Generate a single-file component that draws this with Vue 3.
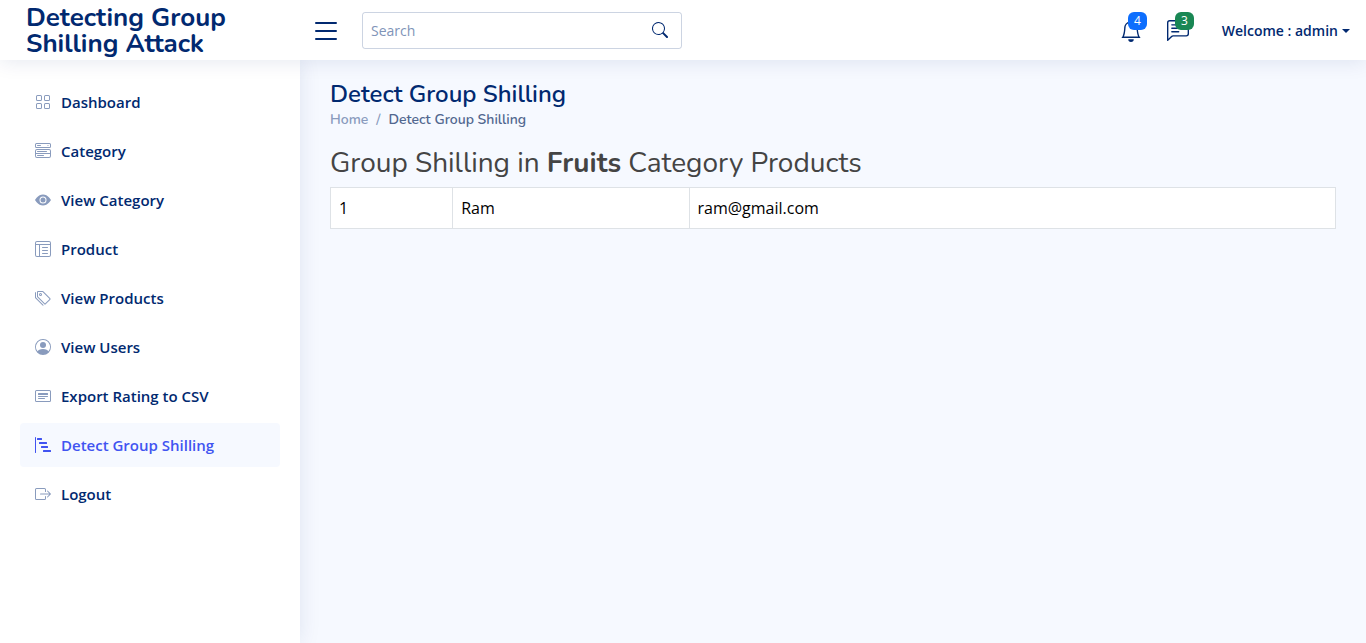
<script setup>
const icons = {
  grid: ['M1 2.5A1.5 1.5 0 0 1 2.5 1h3A1.5 1.5 0 0 1 7 2.5v3A1.5 1.5 0 0 1 5.5 7h-3A1.5 1.5 0 0 1 1 5.5v-3zM2.5 2a.5.5 0 0 0-.5.5v3a.5.5 0 0 0 .5.5h3a.5.5 0 0 0 .5-.5v-3a.5.5 0 0 0-.5-.5h-3zm6.5.5A1.5 1.5 0 0 1 10.5 1h3A1.5 1.5 0 0 1 15 2.5v3A1.5 1.5 0 0 1 13.5 7h-3A1.5 1.5 0 0 1 9 5.5v-3zm1.5-.5a.5.5 0 0 0-.5.5v3a.5.5 0 0 0 .5.5h3a.5.5 0 0 0 .5-.5v-3a.5.5 0 0 0-.5-.5h-3zM1 10.5A1.5 1.5 0 0 1 2.5 9h3A1.5 1.5 0 0 1 7 10.5v3A1.5 1.5 0 0 1 5.5 15h-3A1.5 1.5 0 0 1 1 13.5v-3zm1.5-.5a.5.5 0 0 0-.5.5v3a.5.5 0 0 0 .5.5h3a.5.5 0 0 0 .5-.5v-3a.5.5 0 0 0-.5-.5h-3zm6.5.5A1.5 1.5 0 0 1 10.5 9h3a1.5 1.5 0 0 1 1.5 1.5v3a1.5 1.5 0 0 1-1.5 1.5h-3A1.5 1.5 0 0 1 9 13.5v-3zm1.5-.5a.5.5 0 0 0-.5.5v3a.5.5 0 0 0 .5.5h3a.5.5 0 0 0 .5-.5v-3a.5.5 0 0 0-.5-.5h-3z'],
  menu: [
    'M0 1.5A1.5 1.5 0 0 1 1.5 0h13A1.5 1.5 0 0 1 16 1.5v2A1.5 1.5 0 0 1 14.5 5h-13A1.5 1.5 0 0 1 0 3.5v-2zM1.5 1a.5.5 0 0 0-.5.5v2a.5.5 0 0 0 .5.5h13a.5.5 0 0 0 .5-.5v-2a.5.5 0 0 0-.5-.5h-13z',
    'M2 2.5a.5.5 0 0 1 .5-.5h3a.5.5 0 0 1 0 1h-3a.5.5 0 0 1-.5-.5zm10.823.323-.396-.396A.25.25 0 0 1 12.604 2h.792a.25.25 0 0 1 .177.427l-.396.396a.25.25 0 0 1-.354 0zM0 8a2 2 0 0 1 2-2h12a2 2 0 0 1 2 2v5a2 2 0 0 1-2 2H2a2 2 0 0 1-2-2V8zm1 3v2a1 1 0 0 0 1 1h12a1 1 0 0 0 1-1v-2H1zm14-1V8a1 1 0 0 0-1-1H2a1 1 0 0 0-1 1v2h14zM2 8.5a.5.5 0 0 1 .5-.5h9a.5.5 0 0 1 0 1h-9a.5.5 0 0 1-.5-.5zm0 4a.5.5 0 0 1 .5-.5h6a.5.5 0 0 1 0 1h-6a.5.5 0 0 1-.5-.5z',
  ],
  eye: ['M10.5 8a2.5 2.5 0 1 1-5 0 2.5 2.5 0 0 1 5 0z', 'M0 8s3-5.5 8-5.5S16 8 16 8s-3 5.5-8 5.5S0 8 0 8zm8 3.5a3.5 3.5 0 1 0 0-7 3.5 3.5 0 0 0 0 7z'],
  layout: [
    'M13 6.5a.5.5 0 0 0-.5-.5h-5a.5.5 0 0 0 0 1h5a.5.5 0 0 0 .5-.5zm0 3a.5.5 0 0 0-.5-.5h-5a.5.5 0 0 0 0 1h5a.5.5 0 0 0 .5-.5zm-.5 2.5a.5.5 0 0 1 0 1h-5a.5.5 0 0 1 0-1h5z',
    'M14 0a2 2 0 0 1 2 2v12a2 2 0 0 1-2 2H2a2 2 0 0 1-2-2V2a2 2 0 0 1 2-2h12zM2 1a1 1 0 0 0-1 1v1h14V2a1 1 0 0 0-1-1H2zM1 4v10a1 1 0 0 0 1 1h2V4H1zm4 0v11h9a1 1 0 0 0 1-1V4H5z',
  ],
  tags: [
    'M3 2v4.586l7 7L14.586 9l-7-7H3zM2 2a1 1 0 0 1 1-1h4.586a1 1 0 0 1 .707.293l7 7a1 1 0 0 1 0 1.414l-4.586 4.586a1 1 0 0 1-1.414 0l-7-7A1 1 0 0 1 2 6.586V2z',
    'M5.5 5a.5.5 0 1 1 0-1 .5.5 0 0 1 0 1zm0 1a1.5 1.5 0 1 0 0-3 1.5 1.5 0 0 0 0 3zM1 7.086a1 1 0 0 0 .293.707L8.75 15.25l-.043.043a1 1 0 0 1-1.414 0l-7-7A1 1 0 0 1 0 7.586V3a1 1 0 0 1 1-1v5.086z',
  ],
  person: ['M11 6a3 3 0 1 1-6 0 3 3 0 0 1 6 0z', 'M0 8a8 8 0 1 1 16 0A8 8 0 0 1 0 8zm8-7a7 7 0 0 0-5.468 11.37C3.242 11.226 4.805 10 8 10s4.757 1.225 5.468 2.37A7 7 0 0 0 8 1z'],
  card: [
    'M14.5 3a.5.5 0 0 1 .5.5v9a.5.5 0 0 1-.5.5h-13a.5.5 0 0 1-.5-.5v-9a.5.5 0 0 1 .5-.5h13zm-13-1A1.5 1.5 0 0 0 0 3.5v9A1.5 1.5 0 0 0 1.5 14h13a1.5 1.5 0 0 0 1.5-1.5v-9A1.5 1.5 0 0 0 14.5 2h-13z',
    'M3 8.5a.5.5 0 0 1 .5-.5h9a.5.5 0 0 1 0 1h-9a.5.5 0 0 1-.5-.5zm0 2a.5.5 0 0 1 .5-.5h6a.5.5 0 0 1 0 1h-6a.5.5 0 0 1-.5-.5zm0-5a.5.5 0 0 1 .5-.5h9a.5.5 0 0 1 .5.5v1a.5.5 0 0 1-.5.5h-9a.5.5 0 0 1-.5-.5v-1z',
  ],
  steps: ['M.5 0a.5.5 0 0 1 .5.5v15a.5.5 0 0 1-1 0V.5A.5.5 0 0 1 .5 0zM2 1.5a.5.5 0 0 1 .5-.5h4a.5.5 0 0 1 .5.5v1a.5.5 0 0 1-.5.5h-4a.5.5 0 0 1-.5-.5v-1zm2 4a.5.5 0 0 1 .5-.5h7a.5.5 0 0 1 .5.5v1a.5.5 0 0 1-.5.5h-7a.5.5 0 0 1-.5-.5v-1zm2 4a.5.5 0 0 1 .5-.5h6a.5.5 0 0 1 .5.5v1a.5.5 0 0 1-.5.5h-6a.5.5 0 0 1-.5-.5v-1zm2 4a.5.5 0 0 1 .5-.5h7a.5.5 0 0 1 .5.5v1a.5.5 0 0 1-.5.5h-7a.5.5 0 0 1-.5-.5v-1z'],
  exit: [
    'M10 12.5a.5.5 0 0 1-.5.5h-8a.5.5 0 0 1-.5-.5v-9a.5.5 0 0 1 .5-.5h8a.5.5 0 0 1 .5.5v2a.5.5 0 0 0 1 0v-2A1.5 1.5 0 0 0 9.5 2h-8A1.5 1.5 0 0 0 0 3.5v9A1.5 1.5 0 0 0 1.5 14h8a1.5 1.5 0 0 0 1.5-1.5v-2a.5.5 0 0 0-1 0v2z',
    'M15.854 8.354a.5.5 0 0 0 0-.708l-3-3a.5.5 0 0 0-.708.708L14.293 7.5H5.5a.5.5 0 0 0 0 1h8.793l-2.147 2.146a.5.5 0 0 0 .708.708l3-3z',
  ],
}

const links = [
  { label: 'Dashboard', icon: 'grid' },
  { label: 'Category', icon: 'menu' },
  { label: 'View Category', icon: 'eye' },
  { label: 'Product', icon: 'layout' },
  { label: 'View Products', icon: 'tags' },
  { label: 'View Users', icon: 'person' },
  { label: 'Export Rating to CSV', icon: 'card' },
  { label: 'Detect Group Shilling', icon: 'steps', active: true },
  { label: 'Logout', icon: 'exit' },
]

const rows = [{ id: 1, name: 'Ram', email: 'ram@gmail.com' }]
</script>

<template>
  <div class="page">
    <header class="header">
      <div class="brand">
        <a href="#" class="logo">Detecting Group Shilling Attack</a>
        <button type="button" class="toggle" aria-label="Toggle sidebar">
          <svg viewBox="0 0 16 16"><path fill-rule="evenodd" d="M2.5 12a.5.5 0 0 1 .5-.5h10a.5.5 0 0 1 0 1H3a.5.5 0 0 1-.5-.5zm0-4a.5.5 0 0 1 .5-.5h10a.5.5 0 0 1 0 1H3a.5.5 0 0 1-.5-.5zm0-4a.5.5 0 0 1 .5-.5h10a.5.5 0 0 1 0 1H3a.5.5 0 0 1-.5-.5z" /></svg>
        </button>
      </div>
      <form class="search" @submit.prevent>
        <input type="text" placeholder="Search" aria-label="Search" />
        <button type="submit" aria-label="Submit search">
          <svg viewBox="0 0 16 16"><path d="M11.742 10.344a6.5 6.5 0 1 0-1.397 1.398h-.001c.03.04.062.078.098.115l3.85 3.85a1 1 0 0 0 1.415-1.414l-3.85-3.85a1.007 1.007 0 0 0-.115-.1zM12 6.5a5.5 5.5 0 1 1-11 0 5.5 5.5 0 0 1 11 0z" /></svg>
        </button>
      </form>
      <nav class="tools" aria-label="Account">
        <a href="#" class="tool" aria-label="Notifications">
          <svg viewBox="0 0 16 16"><path d="M8 16a2 2 0 0 0 2-2H6a2 2 0 0 0 2 2zM8 1.918l-.797.161A4.002 4.002 0 0 0 4 6c0 .628-.134 2.197-.459 3.742-.16.767-.376 1.566-.663 2.258h10.244c-.287-.692-.502-1.49-.663-2.258C12.134 8.197 12 6.628 12 6a4.002 4.002 0 0 0-3.203-3.92L8 1.917zM14.22 12c.223.447.481.801.78 1H1c.299-.199.557-.553.78-1C2.68 10.2 3 6.88 3 6c0-2.42 1.72-4.44 4.005-4.901a1 1 0 1 1 1.99 0A5.002 5.002 0 0 1 13 6c0 .88.32 4.2 1.22 6z" /></svg>
          <span class="badge blue">4</span>
        </a>
        <a href="#" class="tool" aria-label="Messages">
          <svg viewBox="0 0 16 16"><path d="M14 1a1 1 0 0 1 1 1v8a1 1 0 0 1-1 1H4.414A2 2 0 0 0 3 11.586l-2 2V2a1 1 0 0 1 1-1h12zM2 0a2 2 0 0 0-2 2v12.793a.5.5 0 0 0 .854.353l2.853-2.853A1 1 0 0 1 4.414 12H14a2 2 0 0 0 2-2V2a2 2 0 0 0-2-2H2z" /><path d="M3 3.5a.5.5 0 0 1 .5-.5h9a.5.5 0 0 1 0 1h-9a.5.5 0 0 1-.5-.5zM3 6a.5.5 0 0 1 .5-.5h9a.5.5 0 0 1 0 1h-9A.5.5 0 0 1 3 6zm0 2.500a.5.5 0 0 1 .5-.5h5a.5.5 0 0 1 0 1h-5a.5.5 0 0 1-.5-.5z" /></svg>
          <span class="badge green">3</span>
        </a>
        <a href="#" class="account">Welcome : admin</a>
      </nav>
    </header>

    <div class="body">
      <aside class="sidebar">
        <nav aria-label="Main">
          <ul>
            <li v-for="link in links" :key="link.label">
              <a href="#" class="link" :class="{ active: link.active }" :aria-current="link.active ? 'page' : null">
                <svg viewBox="0 0 16 16" aria-hidden="true">
                  <path v-for="d in icons[link.icon]" :key="d" :d="d" fill-rule="evenodd" />
                </svg>
                <span>{{ link.label }}</span>
              </a>
            </li>
          </ul>
        </nav>
      </aside>

      <main class="main">
        <h1>Detect Group Shilling</h1>
        <nav aria-label="Breadcrumb">
          <ol class="crumbs">
            <li><a href="#">Home</a></li>
            <li class="current">Detect Group Shilling</li>
          </ol>
        </nav>
        <h2>Group Shilling in <b>Fruits</b> Category Products</h2>
        <table>
          <tbody>
            <tr v-for="row in rows" :key="row.id">
              <td>{{ row.id }}</td>
              <td>{{ row.name }}</td>
              <td>{{ row.email }}</td>
            </tr>
          </tbody>
        </table>
      </main>
    </div>
  </div>
</template>

<style>
body {
  margin: 0;
  background: #f6f9ff;
}
</style>

<style scoped>
* {
  box-sizing: border-box;
}
.page {
  display: flex;
  flex-direction: column;
  min-height: 100vh;
  font: 16px/24px "Open Sans", sans-serif;
  color: #444;
}
a {
  color: inherit;
  text-decoration: none;
}
button {
  padding: 0;
  border: 0;
  background: none;
  color: #012970;
  cursor: pointer;
}
svg {
  display: block;
  flex: none;
  fill: currentColor;
}
ul,
ol {
  margin: 0;
  padding: 0;
  list-style: none;
}
.header {
  position: relative;
  z-index: 2;
  display: flex;
  align-items: center;
  height: 60px;
  padding: 2px 16px 0 26px;
  background: #fff;
  box-shadow: 0 2px 20px rgba(1, 41, 112, 0.1);
  color: #012970;
}
.brand {
  display: flex;
  align-items: center;
  justify-content: space-between;
  width: 316px;
}
.logo {
  width: 240px;
  font: 700 26px/26px Nunito, Lato, sans-serif;
}
.toggle svg {
  width: 32px;
  height: 32px;
}
.search {
  display: flex;
  align-items: center;
  width: 320px;
  height: 37px;
  margin: 0 0 1px 20px;
  border: 1px solid rgba(1, 41, 112, 0.2);
  border-radius: 3px;
}
.search input {
  flex: 1;
  min-width: 0;
  padding: 7px 8px;
  border: 0;
  outline: 0;
  background: none;
  font: 14px/21px "Open Sans", sans-serif;
  color: #012970;
}
.search input::placeholder {
  color: #8094b8;
}
.search svg {
  width: 16px;
  height: 16px;
  margin: 0 13px 1px 8px;
}
.tools {
  display: flex;
  align-items: center;
  margin-left: auto;
}
.tool {
  position: relative;
  margin-right: 25px;
}
.tool svg {
  width: 22px;
  height: 22px;
}
.badge {
  position: absolute;
  top: -8px;
  right: -5px;
  padding: 3px 6px;
  border-radius: 6px;
  font-size: 12px;
  line-height: 12px;
  color: #fff;
}
.blue {
  background: #0d6efd;
}
.green {
  background: #198754;
}
.account {
  display: flex;
  align-items: center;
  gap: 4px;
  margin-left: 8px;
  font-size: 14px;
  font-weight: 600;
}
.account::after {
  content: "";
  border: 4px solid transparent;
  border-top-color: currentColor;
  border-bottom: 0;
}
.body {
  display: flex;
  flex: 1;
}
.sidebar {
  flex: none;
  width: 300px;
  padding: 20px;
  background: #fff;
  box-shadow: 0 0 20px rgba(1, 41, 112, 0.1);
}
.sidebar ul {
  display: grid;
  gap: 5px;
}
.link {
  display: flex;
  align-items: center;
  gap: 10px;
  height: 44px;
  padding: 0 15px;
  border-radius: 4px;
  font-size: 15px;
  font-weight: 600;
  color: #012970;
}
.link svg {
  width: 16px;
  height: 16px;
  color: #899bbd;
}
.link.active {
  background: #f6f9ff;
  color: #4154f1;
}
.link.active svg {
  color: #4154f1;
}
.main {
  flex: 1;
  min-width: 0;
  padding: 20px 30px;
}
h1,
.crumbs,
h2 {
  font-family: Nunito, Lato, sans-serif;
}
h1 {
  margin: 0;
  font-size: 24px;
  line-height: 28px;
  font-weight: 600;
  color: #012970;
}
.crumbs {
  display: flex;
  font-size: 14px;
  line-height: 24px;
  font-weight: 600;
  color: #899bbd;
}
.crumbs .current {
  color: #51678f;
}
.crumbs .current::before {
  content: "/";
  padding: 0 8px;
  color: #899bbd;
}
h2 {
  margin: 14px 0 7px;
  font-size: 28px;
  line-height: 34px;
  font-weight: 400;
}
table {
  width: 100%;
  border-collapse: collapse;
  background: #fff;
  color: #000;
}
td {
  padding: 8px;
  border: 1px solid #dee2e6;
}
</style>
